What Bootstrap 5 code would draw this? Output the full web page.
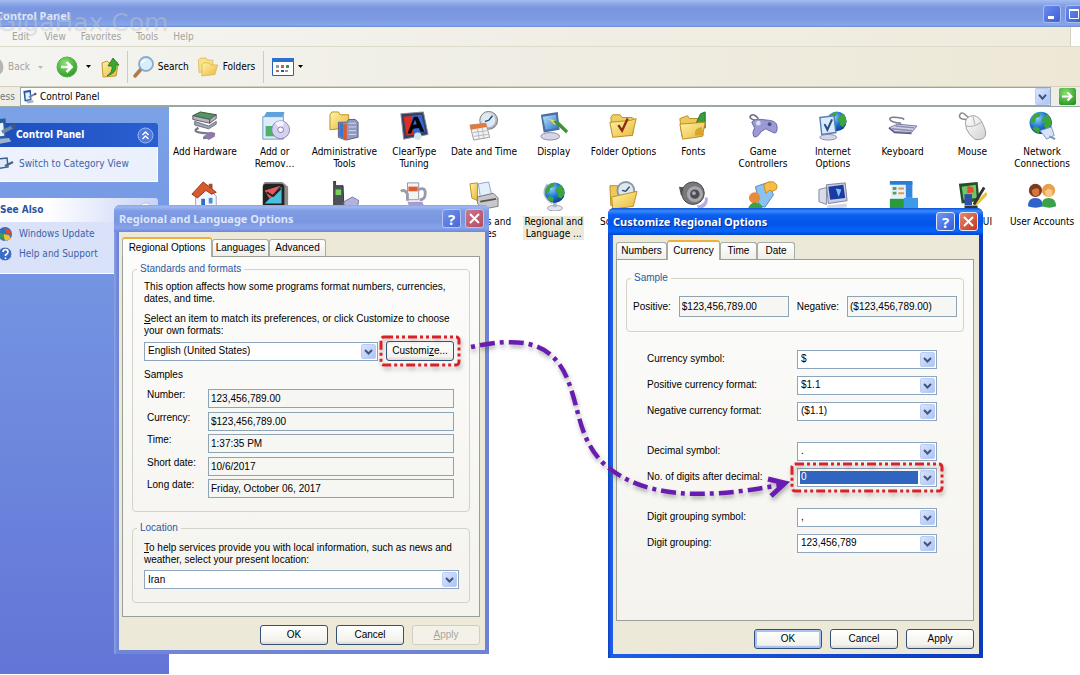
<!DOCTYPE html>
<html lang="en">
<head>
<meta charset="utf-8">
<meta name="viewport" content="width=device-width, initial-scale=1">
<title>Control Panel</title>
<link href="https://cdn.jsdelivr.net/npm/bootstrap@5.3.0/dist/css/bootstrap.min.css" rel="stylesheet">
<style>
:root{--ui:"DejaVu Sans Condensed","DejaVu Sans",sans-serif;--dlg:"Liberation Sans",Arial,sans-serif;--cap:"Noto Sans","Open Sans",sans-serif}
body{font:10px/12px var(--ui);color:#000;background:#fff}
button{font:inherit;color:inherit;padding:0}
svg{display:block;flex:none}
.desktop{position:relative;min-height:100vh;overflow:hidden}
/* main window chrome */
.titlebar{height:27px;background:linear-gradient(#a3bdf0 0,#8ba7e8 4px,#7a96df 8px,#7c99e1 18px,#86a6ea 25px,#7088cf 27px);color:#dfe8fb}
.caption-text{font:bold 11px/14px var(--cap)}
.titlebar .caption-text{margin-left:-4px;margin-top:4px}
.sysbtns{margin-right:-3px}
.sysbtn{width:18px;height:18px;border:1px solid #a9bdf0;border-radius:3px;background:linear-gradient(135deg,#6d8cea,#3c5fd8);display:grid;place-items:center;flex:none}
.watermark{position:absolute;left:-3px;top:7px;font:25px/32px "DejaVu Sans",sans-serif;color:rgba(235,240,252,.3);text-shadow:0 0 1px rgba(130,130,130,.25);white-space:nowrap;pointer-events:none}
.menubar{height:20px;background:linear-gradient(90deg,#f6f6f4,#f0eee5 50%,#efebdc);border-bottom:1px solid #dcdac8;color:#a3a3a0}
.menubar a{color:inherit;text-decoration:none}
.menu-logo{width:10px;background:#fff;border-left:1px solid #d5d2c0}
.toolbar-row{height:40px;background:linear-gradient(90deg,#f4f4f1,#efede3 50%,#ede8d6);border-bottom:1px solid #d2cfbd}
.toolbar-row button{border:0;background:none;display:flex;align-items:center}
.toolbar-row .back-btn{color:#a3a3a0}
.tb-sep{width:1px;height:32px;background:#cfccba;margin:0 4px 0 6px}
.addressbar{height:19px;background:#f0eee4}
.addr-field{border:1px solid #8fa6bd;background:#fff;height:19px}
.addr-field input{border:0;outline:0;background:none;font:inherit;padding:0 3px}
/* task pane */
.workspace{min-height:567px;border-top:1px solid #98a9a8}
.taskpane{width:169px;flex:none;background:linear-gradient(#7ba2e7,#6375d6);margin-bottom:1px;color:#3c62a8}
.taskpane section{width:158px}
.taskpane a{color:#3c62a8;text-decoration:none}
.pane-head{height:24px;font:bold 10px/14px var(--ui);border-top-right-radius:3px}
.pane-head.main-task{background:linear-gradient(90deg,#1d4fbd,#2a5fd2);color:#fff}
.pane-head.more-task{background:linear-gradient(90deg,#fff 30%,#c7d4f7);color:#2c529e}
.pane-body{background:#d9e2f8;border:1px solid #fff;border-top:0;border-left:0}
.main-body{background:linear-gradient(90deg,#eef2fd,#eaf0fc)}
/* icon view */
.iconview{display:grid;grid-template-columns:repeat(13,minmax(0,1fr));grid-auto-rows:70px;padding:4px 3px 0 1px;align-content:start}
.cp-item{text-align:center;color:#000;text-decoration:none;display:flex;flex-direction:column;align-items:center;gap:5px}
.cp-item svg{width:30px;height:30px}
.cp-item svg svg{width:auto;height:auto}
.cp-item span{white-space:nowrap}
.cp-item.selected span{background:#ece9d8;padding:0 1px}
/* dialogs */
.dlg{position:absolute;width:375px;border-radius:6px 6px 0 0;font:10px/12px var(--dlg);padding:0 4px 4px 5px}
.dlg-regional{left:114px;top:205px;height:449px;background:linear-gradient(90deg,#8ea4e8,#7186d8 3px,#6d83d6)}
.dlg-custom{left:608px;top:208px;height:450px;background:linear-gradient(90deg,#0a3fc4,#1c5ee6 3px,#0b3ac0)}
.dlg-title{height:27px;margin:0 -4px 0 -5px;padding:0 5px;border-radius:6px 6px 0 0}
.dlg-regional .dlg-title{background:linear-gradient(#8fa3e3 0,#9db7f1 2px,#7f9be4 6px,#7a96e0 17px,#86a4ec 23px,#7087d6 27px);color:#dde6fb}
.dlg-custom .dlg-title{background:linear-gradient(#0a52d8 0,#3a8af8 3px,#0a5ff0 7px,#0353e8 16px,#0666fb 23px,#0344cc 27px);color:#fff;text-shadow:1px 1px 0 #0a2f90}
.dlg-btn{width:19px;height:19px;border:1px solid #dfe7fb;border-radius:3px;display:grid;place-items:center;color:#fff}
.q-btn{background:linear-gradient(135deg,#7396f0,#2f5fdc);font:bold 15px/16px var(--cap)}
.x-btn{background:linear-gradient(135deg,#e98a6c,#c8341a)}
.dlg-regional .dlg-btn{border-color:#b4c4f2}
.dlg-regional .q-btn{background:linear-gradient(135deg,#7593ea,#4468da)}
.dlg-regional .x-btn{background:linear-gradient(135deg,#c9798e,#b34c60)}
.dlg-client{background:#ece9d8;flex:1;padding:5px 5px 5px 3px}
.tab-strip{height:19px;align-items:flex-end}
.xp-tab{border:1px solid #a7aca5;border-bottom:0;border-radius:3px 3px 0 0;background:linear-gradient(#fff,#efeee6);height:17px;position:relative;line-height:16px;text-align:center}
.xp-tab.current{background:#fcfcfb;height:20px;border-top:2px solid #eeb03c;margin-bottom:-1px;z-index:1}
.tab-page{border:1px solid #9a9f96;background:linear-gradient(#fcfcfb,#f4f3ee);flex:1;padding:0 9px}
.group{border:1px solid #d3d3c8;border-radius:4px;position:relative}
.group legend{position:absolute;top:-7px;left:4px;width:auto;margin:0;padding:0 3px;float:none;font:10px/12px var(--dlg);color:#2b5aa0;background:#fbfbfa}
.group.low legend{background:#f6f5f1}
.g-std{height:243px;margin-top:12px;padding:11px 11px 0}
.g-loc{height:75px;margin-top:16px;padding:13px 10px 0 11px}
.g-sample{height:54px;margin-top:18px;padding:17px 6px 0}
.xp-field{border:1px solid #8ea3b3;background:#f6f6f3;font:10px/12px var(--dlg);height:19px;padding:0 2px;min-width:0;color:#000;border-radius:0}
.g-sample .xp-field{width:112px;height:21px}
.xp-select{position:relative}
.xp-select select{width:100%;height:19px;border:1px solid #8da5bd;background:#fff;appearance:none;font:10px/12px var(--dlg);padding:0 3px;border-radius:0;color:#000;display:block}
.xp-select svg{position:absolute;right:2px;top:2px;pointer-events:none}
.locale-select{width:234px}
.xp-select.picked select{background:linear-gradient(#2f64c0,#2f64c0) 2px 2px/118px 13px no-repeat #fff;color:#fff}
.xp-button{width:68px;height:20px;border:1px solid #33507a;border-radius:3px;background:linear-gradient(#fff,#f3f2ec 80%,#dcd8cc);font:10px/12px var(--dlg)}
.xp-button.default-btn{box-shadow:inset 0 0 0 2px #a9c2f0}
.xp-button:disabled{border-color:#d0cebf;background:#f3f1e8;color:#a9a79a}
.samples{height:109px}
.sample-grid{display:grid;grid-template-columns:61px 246px;align-items:start;padding-left:3px}
.fmt-rows{padding:14px 0 0 21px}
.fmt-row{display:grid;grid-template-columns:150px 140px;align-items:center;height:26px}
.fmt-gap{margin-bottom:14px}
.marker{position:absolute;overflow:visible;pointer-events:none;z-index:2;left:-7px;top:-6px}
.arrow-layer{position:absolute;left:0;top:0;overflow:visible;pointer-events:none}
</style>
</head>
<body>
<svg width="0" height="0" class="position-absolute" aria-hidden="true">
<defs>
<linearGradient id="gArrow" x1="0" y1="0" x2="1" y2="1"><stop offset="0" stop-color="#dbe6fd"/><stop offset="1" stop-color="#abc2f3"/></linearGradient>
<linearGradient id="gFolder" x1="0" y1="0" x2="1" y2="1"><stop offset="0" stop-color="#fff3a6"/><stop offset="1" stop-color="#e9b83a"/></linearGradient>
<radialGradient id="gGlobe" cx=".35" cy=".3" r=".8"><stop offset="0" stop-color="#8fd0fa"/><stop offset=".5" stop-color="#1f74d4"/><stop offset="1" stop-color="#0b3480"/></radialGradient>
<linearGradient id="gGrey" x1="0" y1="0" x2="1" y2="1"><stop offset="0" stop-color="#fafafa"/><stop offset="1" stop-color="#9a9aa4"/></linearGradient>
<linearGradient id="gPale" x1="0" y1="0" x2="1" y2="1"><stop offset="0" stop-color="#fff"/><stop offset="1" stop-color="#d2d2d2"/></linearGradient>
<linearGradient id="gScreen" x1="0" y1="0" x2="1" y2="1"><stop offset="0" stop-color="#b9e6fb"/><stop offset="1" stop-color="#2d78cc"/></linearGradient>
<radialGradient id="gGo" cx=".4" cy=".3" r=".8"><stop offset="0" stop-color="#8be070"/><stop offset="1" stop-color="#249221"/></radialGradient>
<filter id="soft" x="-20%" y="-20%" width="140%" height="160%"><feDropShadow dx="1" dy="3" stdDeviation="2" flood-color="#555" flood-opacity=".45"/></filter>
<symbol id="dd" viewBox="0 0 15 15"><rect x=".5" y=".5" width="14" height="14" rx="1.500" fill="url(#gArrow)" stroke="#bccdf4"/><path d="M4 6l3.500 3.500L11 6" fill="none" stroke="#41567f" stroke-width="2"/></symbol>
<symbol id="folder" viewBox="0 0 32 32"><path d="M3 7l2-3h8l2 3h11l2 2-2 17H5z" fill="#f0cf62" stroke="#b68d22"/><path d="M2 12l22-2 6-2-4 18-21 2z" fill="url(#gFolder)" stroke="#b68d22"/></symbol>
<g id="globe"><circle cx="16" cy="16" r="14" fill="url(#gGlobe)"/><path d="M4 11q4-8 12-8l-1 5-5 2-1 5-6 2zM18 11l6-6q7 6 5 14l-4 5-5-3 1-5-4-2zM9 20l6 3-1 6q-6-2-8-6z" fill="#3da53a"/></g>
<symbol id="cpicon" viewBox="0 0 24 24"><path d="M3 3l12-2 1 17-11 2z" fill="#2b5b9e"/><path d="M6 6l7-1 1 11-7 1z" fill="#e9f3fd"/><path d="M7 19l11-1 2 3-10 2z" fill="#9fb3d0"/><path d="M12 13l10-5" stroke="#6f86a8" stroke-width="3"/><circle cx="22" cy="8" r="2" fill="#40597e"/></symbol>
</defs></svg>

<main class="desktop d-flex flex-column">
<header class="titlebar d-flex align-items-center justify-content-between">
  <span class="caption-text">Control Panel</span>
  <div class="sysbtns d-flex gap-1">
    <button class="sysbtn" aria-label="Minimize"><svg width="12" height="12"><rect x="2" y="8" width="6" height="3" fill="#fff"/></svg></button>
    <button class="sysbtn" aria-label="Maximize"><svg width="12" height="12"><path d="M1.500 2.500h9v8h-9z" fill="none" stroke="#fff"/><path d="M1 2h10" stroke="#fff" stroke-width="2"/></svg></button>
  </div>
</header>
<nav class="menubar d-flex justify-content-between">
  <div class="d-flex align-items-center ps-2 ms-1" style="gap:15px"><a href="#">Edit</a><a href="#">View</a><a href="#">Favorites</a><a href="#">Tools</a><a href="#">Help</a></div>
  <div class="menu-logo"></div>
</nav>
<div class="watermark">GigaHax.Com</div>
<div class="toolbar-row d-flex align-items-center">
  <button class="back-btn"><svg width="8" height="20"><circle cx="-6" cy="10" r="9.500" fill="#b5b5b2"/></svg>Back<svg class="ms-2" width="10" height="6"><path d="M0 2h5l-2.500 3z" fill="#b8b8b4"/></svg></button>
  <button class="ms-2" aria-label="Forward"><svg width="22" height="22" viewBox="0 0 22 22"><circle cx="11" cy="11" r="10" fill="url(#gGo)" stroke="#53b148"/><path d="M5 11h10M10.500 6l5 5-5 5" fill="none" stroke="#fff" stroke-width="2.600"/></svg><svg class="ms-2" width="7" height="6"><path d="M0 1h5l-2.500 3z"/></svg></button>
  <button class="ms-2" aria-label="Up"><svg width="20" height="22" viewBox="0 0 20 22"><path d="M1 7l5-2 2 2 8-1 1 3-2 11-13 1z" fill="url(#gFolder)" stroke="#c39a2e"/><path d="M6 20q6-4 5-10H7l5-8 6 7h-3q1 8-9 11z" fill="#38a834" stroke="#1d7a22" stroke-width=".8"/></svg></button>
  <div class="tb-sep"></div>
  <button class="gap-1"><svg width="22" height="24" viewBox="0 0 22 24"><path d="M3 21l7-8" stroke="#b07a4a" stroke-width="3.500" stroke-linecap="round"/><circle cx="14" cy="9" r="7" fill="#d8effb" stroke="#8aa9cf" stroke-width="1.800"/><path d="M10 8q1-3 4-3" stroke="#fff" stroke-width="1.500" fill="none"/></svg>Search</button>
  <button class="gap-1 ms-2"><svg width="22" height="20" viewBox="0 0 32 28"><path d="M2 4l3-3h8l2 3h8v14l-20 4z" fill="#f8e288" stroke="#d3ae48"/><path d="M7 11l3-3h8l2 3h10l-4 14-19 2z" fill="url(#gFolder)" stroke="#d3ae48"/></svg>Folders</button>
  <div class="tb-sep mx-2"></div>
  <button class="gap-1" aria-label="Views"><svg width="22" height="18" viewBox="0 0 22 18"><path d="M.5.5h21v17H.5z" fill="#fff" stroke="#2b62b8"/><path d="M0 0h22v4H0z" fill="#2f6fce"/><path d="M4 7h3v3H4zM13 12h3v2h-3z" fill="#9a9a9a"/><path d="M9 7h3v3H9z" fill="#d0603a"/><path d="M14 7h3v3h-3z" fill="#3a9a4a"/><path d="M4 12h3v2H4z" fill="#b06a5a"/><path d="M9 12h3v2H9z" fill="#2450b0"/></svg><svg width="6" height="6"><path d="M0 1h5l-2.500 3z"/></svg></button>
</div>
<div class="addressbar d-flex align-items-center">
  <label for="addr" class="text-secondary" style="width:20px">ess</label>
  <div class="addr-field d-flex align-items-center flex-fill">
    <svg width="16" height="15" viewBox="0 0 16 15"><use href="#cpicon" width="16" height="15"/></svg>
    <input id="addr" class="flex-fill" value="Control Panel">
    <svg width="15" height="17" viewBox="0 0 15 15" preserveAspectRatio="none"><use href="#dd" width="15" height="15"/></svg>
  </div>
  <button class="border-0 bg-transparent me-1 ms-2" aria-label="Go"><svg width="17" height="17" viewBox="0 0 17 17"><rect width="17" height="17" rx="2" fill="url(#gGo)"/><path d="M3 8.500h9M8.500 4.500l4 4-4 4" fill="none" stroke="#fff" stroke-width="2"/></svg></button>
</div>

<div class="workspace d-flex flex-fill">
<aside class="taskpane">
  <section class="mt-3">
    <div class="pane-head main-task d-flex align-items-center position-relative"><svg class="position-absolute" style="left:-12px;bottom:2px" width="28" height="28" viewBox="0 0 24 24"><use href="#cpicon" width="24" height="24"/></svg><span class="ms-3 flex-fill">Control Panel</span><svg class="me-1" width="17" height="17" viewBox="0 0 17 17"><circle cx="8.500" cy="8.500" r="7.500" fill="#4f7be0" stroke="#9fb9f2"/><path d="M5.500 8l3-3 3 3M5.500 12l3-3 3 3" fill="none" stroke="#fff" stroke-width="1.400"/></svg></div>
    <div class="pane-body main-body d-flex align-items-center" style="height:35px"><svg width="19" height="16" viewBox="0 0 19 16"><path d="M-4 3l11-1 1 9-12 2z" fill="#dfeaf8" stroke="#3b5f93" stroke-width="1.500"/><path d="M5 10l8-4" stroke="#4a6489" stroke-width="2.500"/></svg><a href="#">Switch to Category View</a></div>
  </section>
  <section class="pt-3">
    <div class="pane-head more-task d-flex align-items-center"><span class="flex-fill">See Also</span><svg class="me-1" width="17" height="17" viewBox="0 0 17 17"><circle cx="8.500" cy="8.500" r="7.500" fill="#fff" stroke="#b4c3ea"/><path d="M5.500 8l3-3 3 3M5.500 12l3-3 3 3" fill="none" stroke="#2c529e" stroke-width="1.400"/></svg></div>
    <div class="pane-body d-flex flex-column gap-1 pt-1" style="height:52px">
      <div class="d-flex align-items-center"><svg width="19" height="16" viewBox="0 0 19 16"><circle cx="5" cy="8" r="7" fill="#2e6ec4"/><path d="M4 2l6 2 2 5-5-1z" fill="#e04a2a"/><path d="M3 8l6 1 2 4-6 2z" fill="#f0c232"/><path d="M-2 6l6 2-1 6-4-3z" fill="#3ba044"/></svg><a href="#">Windows Update</a></div>
      <div class="d-flex align-items-center"><svg width="19" height="16" viewBox="0 0 19 16"><circle cx="5" cy="8" r="7" fill="#3b6cc8" stroke="#dfe8fa"/><path d="M3 6q0-2.500 2.500-2.500T8 6q0 1.500-2.500 3v1M5.500 11.500v1.500" fill="none" stroke="#fff" stroke-width="1.600"/></svg><a href="#">Help and Support</a></div>
    </div>
  </section>
</aside>
<div class="iconview flex-fill">
  <a href="#" class="cp-item"><svg viewBox="0 0 32 32"><path d="M3 5l8-4 17 3-7 5z" fill="#4f9a5a" stroke="#3a4a44"/><path d="M3 5v4l18 4V9zM21 9v4l7-5V4z" fill="#b8b8c4" stroke="#5a5a6a"/><path d="M5 11l15 5 8-5v3l-8 5-15-4z" fill="#a2a2b4" stroke="#5a5a6a" stroke-width=".8"/><path d="M9 18q-7 4 2 5t13 1-2 4l-8 1" fill="none" stroke="#777a88" stroke-width="2.500"/><path d="M14 27l9-5 4 5-7 4z" fill="#8f7ab0"/></svg><span>Add Hardware</span></a>
  <a href="#" class="cp-item"><svg viewBox="0 0 32 32"><path d="M3 6h22v24H3z" fill="#dcecfb" stroke="#7497c4"/><path d="M4 6l3-5h19l-1 5z" fill="#5fa0dd"/><path d="M6 16h8v11H6z" fill="#4fb069"/><path d="M14 20h6v7h-6z" fill="#e3664a"/><circle cx="22" cy="20" r="9.500" fill="#d4d2ee" stroke="#8583b8"/><path d="M22 20l-6-7q5-4 10-1z" fill="#f5f3ff"/><circle cx="22" cy="20" r="3" fill="#fff" stroke="#7874ac"/></svg><span>Add or<br>Remov…</span></a>
  <a href="#" class="cp-item"><svg viewBox="0 0 32 32"><path d="M1 4l2-3h7l2 3h9v14L1 20z" fill="url(#gFolder)" stroke="#b68d22"/><path d="M10 12h9l2-3h7l3 3v16l-13 3-8-3z" fill="#9099c0" stroke="#535c86"/><path d="M11 13h4v16l-4-2z" fill="#3d78c8"/><path d="M15 14h4v16h-4z" fill="#de5a30"/><path d="M21 13h8M21 17h8M21 21h8M21 25h8" stroke="#d7dbee"/></svg><span>Administrative<br>Tools</span></a>
  <a href="#" class="cp-item"><svg viewBox="0 0 32 32"><path d="M2 3l24-2 5 24-26 5z" fill="#39405e" stroke="#85899c"/><path d="M5 6l9-1 2 20-8 1z" fill="#da2f25"/><path d="M14 5l10-1 4 18-12 3z" fill="#2f6bd8"/><path d="M9 24l7-18h4l7 16h-4l-2-4-6 1-2 5zM15 15l4-1-2-5z"/><circle cx="20" cy="27" r="4" fill="#d7e6ee"/></svg><span>ClearType<br>Tuning</span></a>
  <a href="#" class="cp-item"><svg viewBox="0 0 32 32"><circle cx="21" cy="10" r="9.500" fill="url(#gGrey)" stroke="#777"/><circle cx="21" cy="10" r="7" fill="#d8ebfa"/><path d="M21 10l4-5M21 10l-4 1" stroke="#345" stroke-width="1.500"/><path d="M1 15l17-2 4 15-17 3z" fill="#f2f2f2" stroke="#9a9a9a"/><path d="M1 15l17-2 1 4-17 3z" fill="#e37a3c"/><path d="M4 23l15-2M5 27l15-2M9 19l2 11M14 18l2 11" stroke="#b5b5bc"/></svg><span>Date and Time</span></a>
  <a href="#" class="cp-item"><svg viewBox="0 0 32 32"><ellipse cx="12" cy="27" rx="10" ry="4" fill="#d5d5e6" stroke="#8a8aa5"/><path d="M2 4l18-3 2 19-17 3z" fill="#4a6da4" /><path d="M4 6l14-2 2 14-13 2z" fill="url(#gScreen)"/><path d="M10 8l9 3-2 4z" fill="#f3d75a"/><path d="M15 11l5-1 11 11-2 3z" fill="#3d9438"/></svg><span>Display</span></a>
  <a href="#" class="cp-item"><svg viewBox="0 0 32 32"><use href="#folder" width="32" height="32"/><path d="M11 15l4 6 6-13" fill="none" stroke="#8a2b14" stroke-width="2.500"/></svg><span>Folder Options</span></a>
  <a href="#" class="cp-item"><svg viewBox="0 0 32 32"><path d="M2 8l8-3 2 3h10v19H4z" fill="#eec95a" stroke="#b68d22"/><path d="M17 18l7-15 5-2v17z" fill="#35a03c" stroke="#1d7227"/><path d="M2 14l27-2-3 15-21 3z" fill="url(#gFolder)" stroke="#b68d22"/><path d="M18 26q-1-8 7-9l3 9z" fill="#d9a52e"/></svg><span>Fonts</span></a>
  <a href="#" class="cp-item"><svg viewBox="0 0 32 32"><path d="M8 10Q0 8 3 5t8 3" fill="none" stroke="#6f7090" stroke-width="1.800"/><path d="M4 12q3-4 10-3l9 1q9 1 8 9 0 7-6 3l-6-3-5 3q-5 8-8 5-2-4 1-9z" fill="#9a9ad4" stroke="#64649c"/><circle cx="11" cy="13" r="2.500" fill="#dcdcf4"/><circle cx="23" cy="14" r="2" fill="#4c4c86"/></svg><span>Game<br>Controllers</span></a>
  <a href="#" class="cp-item"><svg viewBox="0 0 32 32"><g transform="translate(8 -1) scale(.75)"><use href="#globe"/></g><ellipse cx="11" cy="28" rx="9" ry="3" fill="#d5d5e6" stroke="#8a8aa5"/><path d="M2 7l15-2 2 18-15 2z" fill="#dcebfa" stroke="#5580b8" stroke-width="1.500"/><path d="M7 14l3 6 5-11" fill="none" stroke="#274c90" stroke-width="2.200"/></svg><span>Internet<br>Options</span></a>
  <a href="#" class="cp-item"><svg viewBox="0 0 32 32"><path d="M14 13Q3 12 2 9t8-2 6 2" fill="none" stroke="#7b7b8c" stroke-width="1.600"/><path d="M1 18l9-4 21 2-6 7-18-1z" fill="#d0d0e6" stroke="#75759c"/><path d="M4 19l22 2M8 16l20 2" stroke="#8c8cb0" stroke-width="1.500"/><path d="M1 18l6 5 18 1" fill="none" stroke="#5c5c84" stroke-width="1.500"/></svg><span>Keyboard</span></a>
  <a href="#" class="cp-item"><svg viewBox="0 0 32 32"><path d="M11 9Q1 9 3 4t9 3" fill="none" stroke="#8a8a8a" stroke-width="1.600"/><path d="M9 12q1-7 9-7 6 1 9 8 5 9 3 14-4 5-11 3-6-4-9-11z" fill="url(#gPale)" stroke="#999"/><path d="M10 16q7 2 16-4M17 6l2 8" fill="none" stroke="#aaa"/></svg><span>Mouse</span></a>
  <a href="#" class="cp-item"><svg viewBox="0 0 32 32"><g transform="translate(1 -1) scale(.85)"><use href="#globe"/></g><path d="M14 21l12-4 3 9-8 4z" fill="#d5e5f7" stroke="#7795bb"/><path d="M24 27l6 3" stroke="#8095b0" stroke-width="2"/></svg><span>Network<br>Connections</span></a>

  <a href="#" class="cp-item" aria-label="Home"><svg viewBox="0 0 32 32"><path d="M6 14l13-6 9 8v13l-10 4-12-5z" fill="#f3f6fb" stroke="#9aa4b4"/><path d="M2 14L14 1l14 11-5 2-6-4-9 8z" fill="#d65a30" stroke="#9a3414"/><path d="M20 3h4v6l-4-3z" fill="#a94a2a"/><path d="M12 19h4v9h-4z" fill="#2f6cc4"/><path d="M20 18h4v6h-4z" fill="#4a8ad8"/></svg></a>
  <a href="#" class="cp-item" aria-label="Graphics"><svg viewBox="0 0 32 32"><path d="M5 1h19l6 5v26H3V4z" fill="#8e8e90"/><rect x="3" y="3" width="23" height="28" rx="4" fill="#222"/><path d="M5 10l17-5-12 14z" fill="#e85a5a"/><path d="M5 24L23 6v18z" fill="#4cc0da"/><path d="M7 12l7 4 8-8" fill="none" stroke="#222" stroke-width="2"/></svg></a>
  <a href="#" class="cp-item" aria-label="Phone and Modem"><svg viewBox="0 0 32 32"><path d="M5 0h2v5h8l1 26H5z" fill="#4d5358" stroke="#2e3338"/><path d="M7 9h6v6H7z" fill="#74d25a"/><path d="M16 22l9-5 7 4-3 10H16z" fill="#b2b2da" stroke="#7777a6"/></svg></a>
  <a href="#" class="cp-item" aria-label="Power Options"><svg viewBox="0 0 32 32"><path d="M9 2h12v18H9z" fill="#f4f4f4" stroke="#8e8e9c"/><path d="M10 6h10v5H10z" fill="#df5c30"/><path d="M2 11q4-3 7 3v7M21 9q7-3 7 4t-6 7" fill="none" stroke="#9a9aac" stroke-width="3"/><path d="M9 22h16l3 8H12z" fill="#a79bd0"/></svg></a>
  <a href="#" class="cp-item"><svg viewBox="0 0 32 32"><path d="M1 3l8-1v19l-6-3z" fill="url(#gFolder)" stroke="#b68d22"/><path d="M10 3l11-2 3 13-12 3z" fill="#e3effa" stroke="#8ba6c8"/><path d="M9 17l17-4 5 5v9l-16 3-6-6z" fill="#c8c8cc" stroke="#77777f"/><path d="M12 22l17-3" stroke="#555" stroke-width="2"/></svg><span>Printers and<br>Faxes</span></a>
  <a href="#" class="cp-item selected"><svg viewBox="0 0 32 32"><ellipse cx="17" cy="29" rx="8" ry="3" fill="#e4e4ee" stroke="#9a9aac"/><path d="M15 23h4v5h-4z" fill="#b5b5c0"/><g transform="translate(4 0) scale(.78)"><use href="#globe"/></g><path d="M9 3q-9 12 5 21" fill="none" stroke="#a8b8cc" stroke-width="1.500"/></svg><span>Regional and<br>Language ...</span></a>
  <a href="#" class="cp-item"><svg viewBox="0 0 32 32"><path d="M2 5h9l2 3v18H3z" fill="#eec95a" stroke="#b68d22"/><circle cx="19" cy="10" r="9" fill="#d9e9f2" stroke="#8c98a4" stroke-width="2"/><path d="M19 11l4-5M19 11l-4-1" stroke="#345" stroke-width="1.500"/><path d="M4 17l27-6-4 16-22 3z" fill="url(#gFolder)" stroke="#b68d22"/></svg><span>Scheduled<br>Tasks</span></a>
  <a href="#" class="cp-item" aria-label="Sounds"><svg viewBox="0 0 32 32"><path d="M20 26q9 0 9-9l3 1q0 11-10 12z" fill="#b6aede"/><path d="M1 6l8 1v11l-6-3z" fill="#555"/><circle cx="16" cy="13" r="12" fill="#77777c" stroke="#444"/><circle cx="18" cy="14" r="8.500" fill="#a7a7ad"/><circle cx="18" cy="14" r="5" fill="#4b4b50"/><circle cx="17" cy="13" r="2" fill="#aaa"/></svg></a>
  <a href="#" class="cp-item" aria-label="Speech"><svg viewBox="0 0 32 32"><path d="M8 6l15-5 4 14-9 13-6-2z" fill="#8cc2ee" stroke="#4f86ba"/><path d="M17 5q2-5 10-4 6 3 3 8-4 3-7 1l-4 3z" fill="#f3bf45" stroke="#c98a22"/><circle cx="7" cy="18" r="6" fill="#e98a3c"/><path d="M0 31q1-8 8-8t8 8z" fill="#3ba346"/></svg></a>
  <a href="#" class="cp-item" aria-label="System"><svg viewBox="0 0 32 32"><path d="M1 9l8-2v18l-8-3z" fill="#d9dce8" stroke="#80869c"/><path d="M9 4l20-2 2 19-20 3z" fill="#c9cfde" stroke="#777f98"/><path d="M11 6l16-2 2 14-16 2z" fill="#1c3aa4"/><path d="M19 8l6 1-3 8z" fill="#7ec2f4"/><path d="M9 26l21-2 1 4-20 3z" fill="#d6d9e4"/></svg></a>
  <a href="#" class="cp-item" aria-label="Taskbar"><svg viewBox="0 0 32 32"><path d="M3 1h16v19H3z" fill="#e4f1fd"/><path d="M19 1h7v17h-7z" fill="#3485dc"/><path d="M2 0h24v4H2z" fill="#2d7cd4"/><path d="M5 8h4M5 13h4" stroke="#5aa05a" stroke-width="3"/><path d="M11 8h6M11 13h6" stroke="#e09a4a" stroke-width="2"/><path d="M2 19h15v13H2z" fill="#2a9a3c"/><path d="M17 18h15v14H17z" fill="#3c9ae8"/></svg></a>
  <a href="#" class="cp-item"><svg viewBox="0 0 32 32"><path d="M2 3l20-2 2 20-19 3z" fill="#23502c"/><path d="M5 6l15-2 1 14-14 2z" fill="#6fc76a"/><path d="M11 5l6 2 1 5-7 1z" fill="#e34d2c"/><path d="M8 14h8v12H8z" fill="#2f4ea8"/><path d="M32 13L16 29" stroke="#e6c832" stroke-width="3.500"/><path d="M29 7L18 25M8 28h14" stroke="#333" stroke-width="3"/></svg><span>Tweak UI</span></a>
  <a href="#" class="cp-item"><svg viewBox="0 0 32 32"><circle cx="9" cy="10" r="7" fill="#7a3a20"/><path d="M5 10q5-4 8-1v5q-4 4-7 0z" fill="#d9743c"/><circle cx="23" cy="10" r="7" fill="#e8a04a"/><path d="M19 11q4-5 8-1v5q-4 4-7 0z" fill="#f6c988"/><path d="M1 27q0-9 8-9t8 9q-8 3-16 0z" fill="#2f62c8"/><path d="M16 27q-1-9 7-9t8 9q-7 3-15 0z" fill="#3aa24a"/></svg><span>User Accounts</span></a>
</div>
</div>

<section class="dlg dlg-regional d-flex flex-column" role="dialog" aria-label="Regional and Language Options">
  <div class="dlg-title d-flex align-items-center gap-1">
    <span class="caption-text flex-fill">Regional and Language Options</span>
    <button class="dlg-btn q-btn" aria-label="Help">?</button>
    <button class="dlg-btn x-btn" aria-label="Close"><svg width="11" height="11"><path d="M1 1l9 9M10 1l-9 9" stroke="#fff" stroke-width="2"/></svg></button>
  </div>
  <div class="dlg-client d-flex flex-column">
    <div class="tab-strip d-flex">
      <button class="xp-tab current" style="width:90px">Regional Options</button><button class="xp-tab" style="width:57px">Languages</button><button class="xp-tab" style="width:57px">Advanced</button>
    </div>
    <div class="tab-page">
      <fieldset class="group g-std">
        <legend>Standards and formats</legend>
        <p class="mb-2">This option affects how some programs format numbers, currencies,<br>dates, and time.</p>
        <label for="loc" class="d-block">
          <u>S</u>elect an item to match its preferences, or click Customize to choose<br>your own formats:</label>
        <div class="d-flex gap-2 align-items-center mt-1">
          <div class="xp-select locale-select"><select id="loc"><option>English (United States)</option></select><svg width="15" height="15" viewBox="0 0 15 15"><use href="#dd" width="15" height="15"/></svg></div>
          <div class="position-relative"><button class="xp-button">Customi<u>z</u>e...</button>
            <svg class="marker" width="82" height="32"><rect x="2" y="2" width="78" height="28" rx="3" fill="none" stroke="#d8202a" stroke-width="3" stroke-dasharray="9 3 3 3 3 3" filter="url(#soft)"/></svg></div>
        </div>
        <div class="my-2">Samples</div>
        <div class="samples d-flex flex-column justify-content-between">
          <div class="sample-grid"><label for="s1">Number:</label><input id="s1" class="xp-field" readonly value="123,456,789.00"></div>
          <div class="sample-grid"><label for="s2">Currency:</label><input id="s2" class="xp-field" readonly value="$123,456,789.00"></div>
          <div class="sample-grid"><label for="s3">Time:</label><input id="s3" class="xp-field" readonly value="1:37:35 PM"></div>
          <div class="sample-grid"><label for="s4">Short date:</label><input id="s4" class="xp-field" readonly value="10/6/2017"></div>
          <div class="sample-grid"><label for="s5">Long date:</label><input id="s5" class="xp-field" readonly value="Friday, October 06, 2017"></div>
        </div>
      </fieldset>
      <fieldset class="group g-loc low">
        <legend>Location</legend>
        <label for="country" class="d-block mb-1"><u>T</u>o help services provide you with local information, such as news and<br>weather, select your present location:</label>
        <div class="xp-select"><select id="country"><option>Iran</option></select><svg width="15" height="15" viewBox="0 0 15 15"><use href="#dd" width="15" height="15"/></svg></div>
      </fieldset>
    </div>
    <div class="d-flex justify-content-end gap-2 pt-2">
      <button class="xp-button">OK</button><button class="xp-button">Cancel</button><button class="xp-button" disabled><u>A</u>pply</button>
    </div>
  </div>
</section>

<section class="dlg dlg-custom d-flex flex-column" role="dialog" aria-label="Customize Regional Options">
  <div class="dlg-title d-flex align-items-center gap-1">
    <span class="caption-text flex-fill">Customize Regional Options</span>
    <button class="dlg-btn q-btn" aria-label="Help">?</button>
    <button class="dlg-btn x-btn" aria-label="Close"><svg width="11" height="11"><path d="M1 1l9 9M10 1l-9 9" stroke="#fff" stroke-width="2"/></svg></button>
  </div>
  <div class="dlg-client d-flex flex-column">
    <div class="tab-strip d-flex">
      <button class="xp-tab" style="width:51px">Numbers</button><button class="xp-tab current" style="width:53px">Currency</button><button class="xp-tab" style="width:37px">Time</button><button class="xp-tab" style="width:38px">Date</button>
    </div>
    <div class="tab-page">
      <fieldset class="group g-sample">
        <legend>Sample</legend>
        <div class="d-flex align-items-center gap-2">
          <label for="pos">Positive:</label><input id="pos" class="xp-field" readonly value="$123,456,789.00">
          <label for="neg">Negative:</label><input id="neg" class="xp-field" readonly value="($123,456,789.00)">
        </div>
      </fieldset>
      <div class="fmt-rows">
        <div class="fmt-row"><label for="f1">Currency symbol:</label><div class="xp-select"><select id="f1"><option>$</option></select><svg width="15" height="15" viewBox="0 0 15 15"><use href="#dd" width="15" height="15"/></svg></div></div>
        <div class="fmt-row"><label for="f2">Positive currency format:</label><div class="xp-select"><select id="f2"><option>$1.1</option></select><svg width="15" height="15" viewBox="0 0 15 15"><use href="#dd" width="15" height="15"/></svg></div></div>
        <div class="fmt-row fmt-gap"><label for="f3">Negative currency format:</label><div class="xp-select"><select id="f3"><option>($1.1)</option></select><svg width="15" height="15" viewBox="0 0 15 15"><use href="#dd" width="15" height="15"/></svg></div></div>
        <div class="fmt-row"><label for="f4">Decimal symbol:</label><div class="xp-select"><select id="f4"><option>.</option></select><svg width="15" height="15" viewBox="0 0 15 15"><use href="#dd" width="15" height="15"/></svg></div></div>
        <div class="fmt-row fmt-gap"><label for="f5">No. of digits after decimal:</label><div class="position-relative"><div class="xp-select picked"><select id="f5"><option>0</option></select><svg width="15" height="15" viewBox="0 0 15 15"><use href="#dd" width="15" height="15"/></svg></div>
          <svg class="marker" width="154" height="31"><rect x="2" y="2" width="150" height="27" rx="3" fill="none" stroke="#d8202a" stroke-width="3" stroke-dasharray="9 3 3 3 3 3" filter="url(#soft)"/></svg></div></div>
        <div class="fmt-row"><label for="f6">Digit grouping symbol:</label><div class="xp-select"><select id="f6"><option>,</option></select><svg width="15" height="15" viewBox="0 0 15 15"><use href="#dd" width="15" height="15"/></svg></div></div>
        <div class="fmt-row"><label for="f7">Digit grouping:</label><div class="xp-select"><select id="f7"><option>123,456,789</option></select><svg width="15" height="15" viewBox="0 0 15 15"><use href="#dd" width="15" height="15"/></svg></div></div>
      </div>
    </div>
    <div class="d-flex justify-content-end gap-2 pt-2">
      <button class="xp-button default-btn">OK</button><button class="xp-button">Cancel</button><button class="xp-button">Apply</button>
    </div>
  </div>
</section>

<svg class="arrow-layer" width="1080" height="675" aria-hidden="true"><g fill="none" stroke="#6a1fb0" stroke-width="4.500" filter="url(#soft)"><path d="M471 347C515 338 550 338 567 378C580 410 578 436 602 462C640 498 700 500 780 485" stroke-dasharray="4 5 15 5"/><path d="M768 479l17 4-14 13" stroke-width="5"/></g></svg>
</main>
<script src="https://cdn.jsdelivr.net/npm/bootstrap@5.3.0/dist/js/bootstrap.bundle.min.js"></script>
</body>
</html>
